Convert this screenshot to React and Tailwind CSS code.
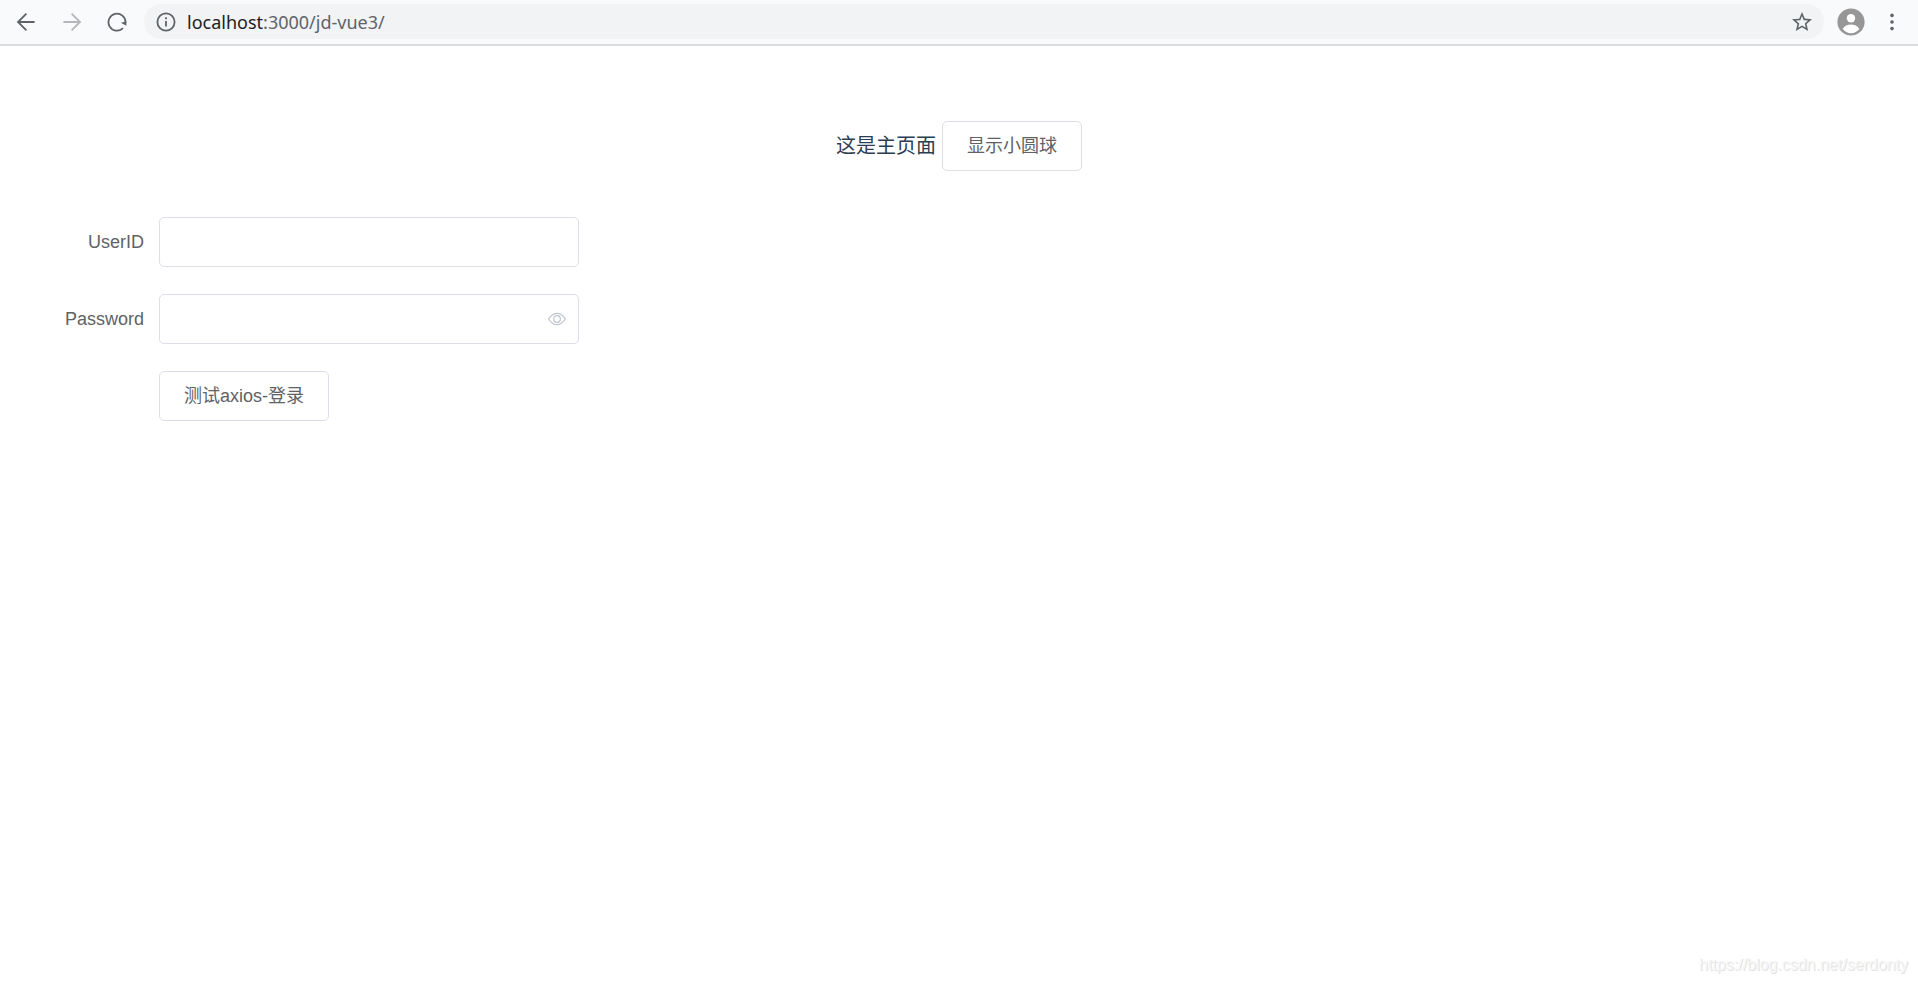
import { useState } from "react";

const iconButton = "flex size-7 shrink-0 items-center justify-center";
const boxed = "h-[50px] rounded-[5px] border border-[#dcdfe6] bg-white text-lg text-[#606266]";

function ArrowIcon({ className }) {
  return (
    <svg viewBox="0 0 20 20" className={className} fill="none" stroke="currentColor" strokeWidth="1.8" aria-hidden="true">
      <path d="M18.600 10H2.200M10.400 1.600 2 10l8.400 8.400" />
    </svg>
  );
}

function ReloadIcon() {
  return (
    <svg viewBox="0 0 20 20" className="size-5" fill="none" aria-hidden="true">
      <path d="M16 16.200A8.500 8.500 0 1 1 18.500 10.500" stroke="currentColor" strokeWidth="1.8" />
      <path d="M13.800 10.800l5.600-1.400v4.400z" fill="currentColor" />
    </svg>
  );
}

function InfoIcon() {
  return (
    <svg viewBox="0 0 20 20" className="size-5" fill="none" stroke="currentColor" strokeWidth="1.8" aria-hidden="true">
      <circle cx="10" cy="10" r="8.6" />
      <path d="M10 9v5.6M10 5.2v2" />
    </svg>
  );
}

function StarIcon() {
  return (
    <svg viewBox="0 0 24 24" className="size-6" fill="currentColor" aria-hidden="true">
      <path d="m22 9.24-7.19-.62L12 2 9.19 8.63 2 9.24l5.46 4.73L5.82 21 12 17.27 18.18 21l-1.63-7.03L22 9.24zM12 15.4l-3.76 2.27 1-4.28-3.32-2.88 4.38-.38L12 6.1l1.71 4.04 4.38.38-3.32 2.88 1 4.28L12 15.4z" />
    </svg>
  );
}

function AvatarIcon() {
  return (
    <svg viewBox="0 0 28 28" className="size-7" aria-hidden="true">
      <circle cx="14" cy="14" r="13.6" fill="#969796" />
      <circle cx="14" cy="10.3" r="4.2" fill="#fff" />
      <path d="M5.7 21c1.4-3 5-4.4 8.3-4.4s6.9 1.4 8.3 4.4A10.9 10.9 0 0 1 14 25.2 10.9 10.9 0 0 1 5.7 21z" fill="#fff" />
    </svg>
  );
}

function MenuIcon() {
  return (
    <svg viewBox="0 0 20 20" className="size-5" fill="currentColor" aria-hidden="true">
      <circle cx="10" cy="3.4" r="1.8" />
      <circle cx="10" cy="10" r="1.8" />
      <circle cx="10" cy="16.6" r="1.8" />
    </svg>
  );
}

function EyeIcon() {
  return (
    <svg viewBox="0 0 1024 1024" className="size-[18px]" fill="currentColor" aria-hidden="true">
      <path d="M512 160c320 0 512 352 512 352S832 864 512 864 0 512 0 512s192-352 512-352zm0 64c-225.300 0-384.100 208.100-436.800 288 52.600 79.900 211.500 288 436.800 288 225.300 0 384.100-208.100 436.800-288-52.600-79.900-211.500-288-436.800-288zm0 64a224 224 0 1 1 0 448 224 224 0 0 1 0-448zm0 64a160.200 160.200 0 0 0-160 160c0 88.200 71.700 160 160 160s160-71.800 160-160c0-88.200-71.700-160-160-160z" />
    </svg>
  );
}

function BrowserBar() {
  return (
    <header className="flex h-[46px] items-center border-b-2 border-[#d9dbdf] bg-[#f9fafc] px-3 pb-px text-[#5f6368]">
      <button type="button" aria-label="Back" className={iconButton}>
        <ArrowIcon className="size-5" />
      </button>
      <button type="button" aria-label="Forward" className={`${iconButton} ml-[18px] text-[#b4b6b9]`}>
        <ArrowIcon className="size-5 rotate-180" />
      </button>
      <button type="button" aria-label="Reload" className={`${iconButton} ml-[17px]`}>
        <ReloadIcon />
      </button>
      <div className="ml-[13px] flex h-[35px] min-w-0 flex-1 items-center rounded-full bg-[#f1f3f4] px-2">
        <button type="button" aria-label="Site information" className={iconButton}>
          <InfoIcon />
        </button>
        <a href="/jd-vue3/" className="ml-[7px] flex-1 truncate font-['Noto_Sans','Open_Sans',sans-serif] text-lg">
          <span className="text-[#202124]">localhost</span>:3000/jd-vue3/
        </a>
        <button type="button" aria-label="Bookmark" className={iconButton}>
          <StarIcon />
        </button>
      </div>
      <button type="button" aria-label="Profile" className={`${iconButton} ml-[13px]`}>
        <AvatarIcon />
      </button>
      <button type="button" aria-label="Menu" className={`${iconButton} ml-[13px]`}>
        <MenuIcon />
      </button>
    </header>
  );
}

export default function App() {
  const [visible, setVisible] = useState(false);

  return (
    <div className="flex min-h-screen flex-col bg-white font-['Liberation_Sans','Noto_Sans_CJK_SC',sans-serif]">
      <BrowserBar />
      <main className="pt-[75px]">
        <div className="flex items-center justify-center gap-1.5 text-xl text-[#2c3e50]">
          <p>这是主页面</p>
          <button type="button" className={`${boxed} px-6`}>显示小圆球</button>
        </div>
        <form className="mt-[46px] flex flex-col gap-[27px]" onSubmit={(e) => e.preventDefault()}>
          <div className="flex items-center">
            <label htmlFor="user-id" className="w-[159px] pr-[15px] text-right text-lg text-[#606266]">UserID</label>
            <input id="user-id" type="text" className={`${boxed} w-[420px] px-4`} />
          </div>
          <div className="flex items-center">
            <label htmlFor="password" className="w-[159px] pr-[15px] text-right text-lg text-[#606266]">Password</label>
            <div className={`${boxed} flex w-[420px] items-center pr-3`}>
              <input id="password" type={visible ? "text" : "password"} className="h-full min-w-0 flex-1 px-4 outline-none" />
              <button type="button" aria-label="Show password" className="text-[#c0c4cc]" onClick={() => setVisible(!visible)}>
                <EyeIcon />
              </button>
            </div>
          </div>
          <div className="flex pl-[159px]">
            <button type="submit" className={`${boxed} px-6`}>测试axios-登录</button>
          </div>
        </form>
      </main>
      <footer className="mt-auto px-2.5 pb-2 text-right text-base text-[#f6f6f6] [text-shadow:1px_1px_0_#e2e2e2]">
        https://blog.csdn.net/serdonty
      </footer>
    </div>
  );
}
